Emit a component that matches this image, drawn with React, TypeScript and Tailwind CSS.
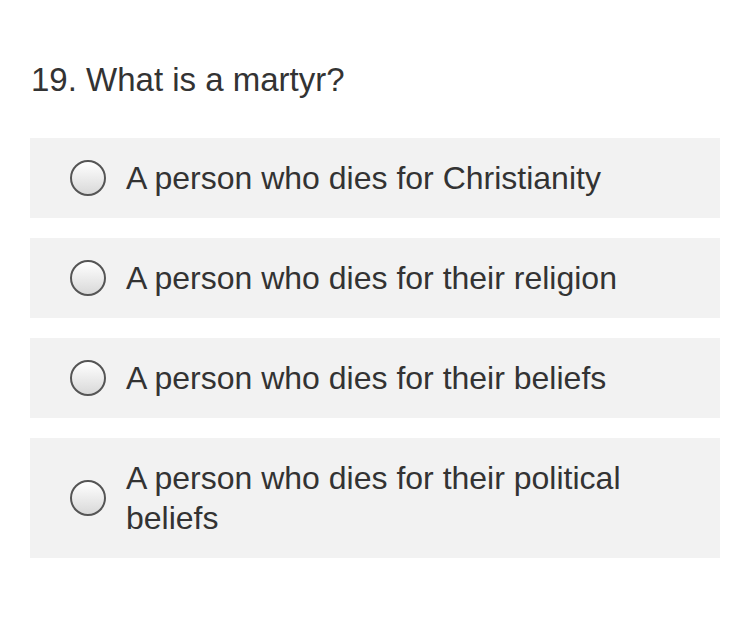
import React from 'react';

const options = [
  'A person who dies for Christianity',
  'A person who dies for their religion',
  'A person who dies for their beliefs',
  'A person who dies for their political beliefs',
];

function Radio() {
  return (
    <span className="w-9 h-9 shrink-0 rounded-full border-2 border-[#555] bg-gradient-to-b from-white to-[#d9d9d9]" />
  );
}

export default function App() {
  return (
    <div
      className="w-[750px] h-[620px] bg-white text-[#333]"
      style={{ fontFamily: '"Liberation Sans", Arial, sans-serif' }}
    >
      <div className="pt-[60px] pl-[31px] pr-[30px]">
        <h2 className="text-[33px] leading-[40px] font-normal">19. What is a martyr?</h2>
      </div>
      <div className="mt-[38px] ml-[30px] w-[690px] flex flex-col gap-5">
        {options.map((opt) => (
          <label
            key={opt}
            className="flex items-center gap-5 bg-[#f2f2f2] pl-10 pr-8 py-5 min-h-[80px]"
          >
            <Radio />
            <span className="text-[32px] leading-[40px] max-w-[540px]">{opt}</span>
          </label>
        ))}
      </div>
    </div>
  );
}
